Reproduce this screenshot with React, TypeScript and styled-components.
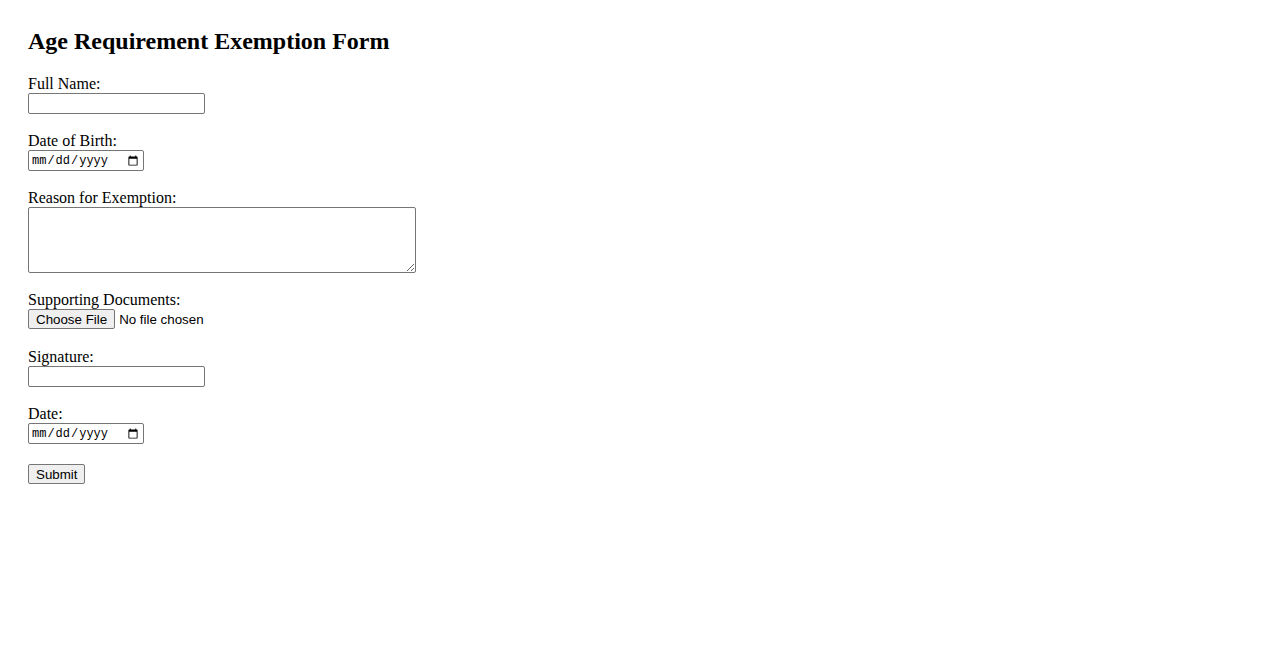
import React from 'react';
import styled, { createGlobalStyle } from 'styled-components';

const GlobalStyle = createGlobalStyle`
  body {
    margin: 0;
    background: #ffffff;
    font-family: "Liberation Serif", "Times New Roman", serif;
    font-size: 16px;
    color: #000000;
  }
`;

const Page = styled.div`
  padding: 27px 28px 28px 28px;
`;

const Title = styled.h2`
  margin: 0 0 21px 0;
  font-size: 24px;
  line-height: 28px;
  font-weight: bold;
`;

const Form = styled.form`
  display: flex;
  flex-direction: column;
  align-items: flex-start;
`;

const Field = styled.div`
  display: flex;
  flex-direction: column;
  align-items: flex-start;
  margin-bottom: 19px;
`;

const Label = styled.label`
  display: block;
  line-height: 16px;
  height: 17px;
`;

const TextInput = styled.input`
  box-sizing: border-box;
  width: 177px;
  height: 21px;
  margin: 0;
  padding: 1px 2px;
  border: 1px solid #767676;
  border-radius: 2px;
  font-family: "Liberation Sans", Arial, sans-serif;
  font-size: 13.33px;
`;

const DateInput = styled.input`
  box-sizing: border-box;
  width: 116px;
  height: 21px;
  margin: 0;
  padding: 1px 2px;
  border: 1px solid #767676;
  border-radius: 2px;
  font-family: "Liberation Mono", "DejaVu Sans Mono", monospace;
  font-size: 12px;
  color: #000000;
`;

const TextArea = styled.textarea`
  box-sizing: border-box;
  width: 388px;
  height: 66px;
  margin: 0;
  padding: 2px;
  border: 1px solid #767676;
  border-radius: 2px;
  font-family: "Liberation Mono", monospace;
  font-size: 13.33px;
`;

const FileInput = styled.input`
  margin: 0;
  font-family: "Liberation Sans", Arial, sans-serif;
  font-size: 13.33px;
  height: 21px;

  &::file-selector-button {
    font-family: "Liberation Sans", Arial, sans-serif;
    font-size: 13.33px;
    height: 20px;
    padding: 1px 7px;
    margin-right: 4px;
    background: #efefef;
    border: 1px solid #767676;
    border-radius: 2px;
    color: #000000;
  }
`;

const SubmitButton = styled.button`
  margin: 1px 0 0 0;
  height: 20px;
  padding: 1px 7px;
  background: #efefef;
  border: 1px solid #767676;
  border-radius: 2px;
  font-family: "Liberation Sans", Arial, sans-serif;
  font-size: 13.33px;
  color: #000000;
`;

export default function App() {
  return (
    <>
      <GlobalStyle />
      <Page>
        <Title>Age Requirement Exemption Form</Title>
        <Form onSubmit={(e) => e.preventDefault()}>
          <Field>
            <Label htmlFor="fullName">Full Name:</Label>
            <TextInput id="fullName" type="text" />
          </Field>
          <Field>
            <Label htmlFor="dob">Date of Birth:</Label>
            <DateInput id="dob" type="date" />
          </Field>
          <Field>
            <Label htmlFor="reason">Reason for Exemption:</Label>
            <TextArea id="reason" />
          </Field>
          <Field>
            <Label htmlFor="docs">Supporting Documents:</Label>
            <FileInput id="docs" type="file" />
          </Field>
          <Field>
            <Label htmlFor="signature">Signature:</Label>
            <TextInput id="signature" type="text" />
          </Field>
          <Field>
            <Label htmlFor="date">Date:</Label>
            <DateInput id="date" type="date" />
          </Field>
          <SubmitButton type="submit">Submit</SubmitButton>
        </Form>
      </Page>
    </>
  );
}
